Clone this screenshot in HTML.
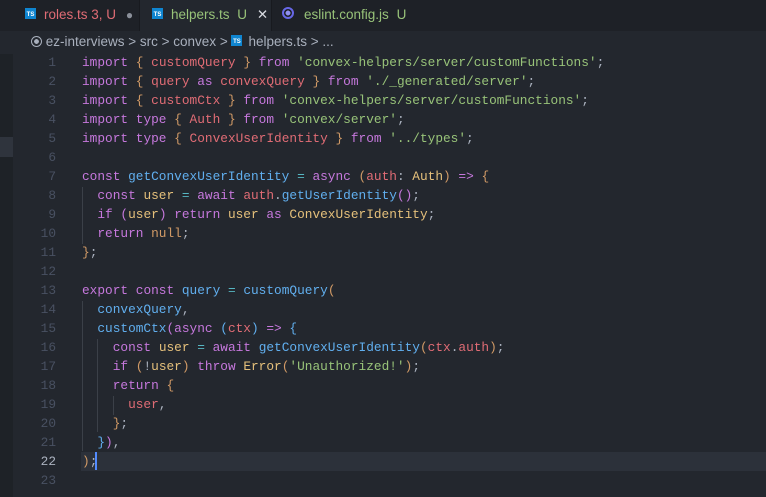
<!DOCTYPE html><html><head><style>
body{margin:0;width:766px;height:497px;background:#23272e;overflow:hidden;font-family:"Liberation Sans",sans-serif;position:relative}
.tabs{position:absolute;left:0;top:0;width:766px;height:31px;background:#1e2127}
.tab{position:absolute;top:0;height:31px;line-height:30px;font-size:13.5px;white-space:nowrap}
.ts{display:inline-block;width:11px;height:11px;background:#0f85d0;color:#fff;font-size:6px;line-height:14px;text-align:center;font-weight:bold;vertical-align:middle;margin-right:8px;position:relative;top:-2px}
.bc{position:absolute;top:31px;left:0;width:766px;height:23px;line-height:22px;font-size:13.5px;color:#a9b0bd;white-space:nowrap}
.code{position:absolute;top:53px;left:0;width:766px;height:444px;font-family:"Liberation Mono",monospace;font-size:12.8px;line-height:19px;white-space:pre}
.ln{position:absolute;top:0;left:0;width:56px;text-align:right;color:#495162}
.tx{position:absolute;top:0;left:82px;color:#abb2bf}
.k{color:#c678dd}.b{color:#d19a66}.v{color:#e06c75}.s{color:#98c379}.f{color:#61afef}.y{color:#e5c07b}.c{color:#56b6c2}
.g{position:absolute;width:1px;background:#3b4048}
</style></head><body>
<div class="tabs">
<div class="tab" style="left:0;width:139px;border-right:1px solid #181a1f"><span style="margin-left:25px"></span><span class="ts">TS</span><span style="color:#e06c75">roles.ts</span> <span style="color:#e06c75">3, U</span> <span style="color:#8b909a;font-size:12px;margin-left:6px">●</span></div>
<div class="tab" style="left:140px;width:131px;background:#23272e"><span style="margin-left:12px"></span><span class="ts">TS</span><span style="color:#98c379">helpers.ts</span> <span style="color:#98c379;margin-left:4px">U</span> <span style="color:#d7dae0;margin-left:6px">✕</span></div>
<div class="tab" style="left:271px;width:150px;border-left:1px solid #181a1f"><span style="margin-left:10px;display:inline-block;width:8px;height:8px;border:2px solid #6767e6;border-radius:50%;vertical-align:middle;position:relative;top:-2px;background:radial-gradient(#8f8ff0 40%,#1e2127 45%)"></span><span style="color:#98c379;margin-left:10px">eslint.config.js</span> <span style="color:#98c379;margin-left:4px">U</span></div>
</div>
<div class="bc"><span style="margin-left:31px;display:inline-block;width:9px;height:9px;border:1.5px solid #a9b0bd;border-radius:50%;vertical-align:middle;position:relative;top:-1px;background:radial-gradient(#a9b0bd 35%,transparent 40%)"></span> ez-interviews &gt; src &gt; convex &gt; <span class="ts" style="margin-right:6px">TS</span>helpers.ts &gt; ...</div>
<div style="position:absolute;left:0;top:54px;width:13px;height:443px;background:#1e2227"></div>
<div style="position:absolute;left:0;top:137px;width:13px;height:20px;background:#2f343d"></div>
<div style="position:absolute;left:81px;top:452px;width:685px;height:19px;background:#2c313a"></div>
<div style="position:absolute;left:95px;top:452px;width:2px;height:18px;background:#528bff"></div>
<div class="g" style="left:82px;top:187px;height:57px"></div>
<div class="g" style="left:82px;top:301px;height:150px"></div>
<div class="g" style="left:97px;top:339px;height:93px"></div>
<div class="g" style="left:113px;top:396px;height:19px"></div>
<div class="code"><div class="ln">1
2
3
4
5
6
7
8
9
10
11
12
13
14
15
16
17
18
19
20
21
<span style="color:#abb2bf">22</span>
23</div><div class="tx"><span class="k">import</span> <span class="b">{</span> <span class="v">customQuery</span> <span class="b">}</span> <span class="k">from</span> <span class="s">'convex-helpers/server/customFunctions'</span>;
<span class="k">import</span> <span class="b">{</span> <span class="v">query</span> <span class="k">as</span> <span class="v">convexQuery</span> <span class="b">}</span> <span class="k">from</span> <span class="s">'./_generated/server'</span>;
<span class="k">import</span> <span class="b">{</span> <span class="v">customCtx</span> <span class="b">}</span> <span class="k">from</span> <span class="s">'convex-helpers/server/customFunctions'</span>;
<span class="k">import</span> <span class="k">type</span> <span class="b">{</span> <span class="v">Auth</span> <span class="b">}</span> <span class="k">from</span> <span class="s">'convex/server'</span>;
<span class="k">import</span> <span class="k">type</span> <span class="b">{</span> <span class="v">ConvexUserIdentity</span> <span class="b">}</span> <span class="k">from</span> <span class="s">'../types'</span>;

<span class="k">const</span> <span class="f">getConvexUserIdentity</span> <span class="c">=</span> <span class="k">async</span> <span class="b">(</span><span class="v">auth</span>: <span class="y">Auth</span><span class="b">)</span> <span class="k">=&gt;</span> <span class="b">{</span>
  <span class="k">const</span> <span class="y">user</span> <span class="c">=</span> <span class="k">await</span> <span class="v">auth</span>.<span class="f">getUserIdentity</span><span class="k">()</span>;
  <span class="k">if</span> <span class="k">(</span><span class="y">user</span><span class="k">)</span> <span class="k">return</span> <span class="y">user</span> <span class="k">as</span> <span class="y">ConvexUserIdentity</span>;
  <span class="k">return</span> <span class="b">null</span>;
<span class="b">}</span>;

<span class="k">export</span> <span class="k">const</span> <span class="f">query</span> <span class="c">=</span> <span class="f">customQuery</span><span class="b">(</span>
  <span class="f">convexQuery</span>,
  <span class="f">customCtx</span><span class="k">(async</span> <span class="f">(</span><span class="v">ctx</span><span class="f">)</span> <span class="k">=&gt;</span> <span class="f">{</span>
    <span class="k">const</span> <span class="y">user</span> <span class="c">=</span> <span class="k">await</span> <span class="f">getConvexUserIdentity</span><span class="b">(</span><span class="v">ctx</span>.<span class="v">auth</span><span class="b">)</span>;
    <span class="k">if</span> <span class="b">(</span>!<span class="y">user</span><span class="b">)</span> <span class="k">throw</span> <span class="y">Error</span><span class="b">(</span><span class="s">'Unauthorized!'</span><span class="b">)</span>;
    <span class="k">return</span> <span class="b">{</span>
      <span class="v">user</span>,
    <span class="b">}</span>;
  <span class="f">}</span><span class="k">)</span>,
<span class="b">)</span>;</div></div>
</body></html>
